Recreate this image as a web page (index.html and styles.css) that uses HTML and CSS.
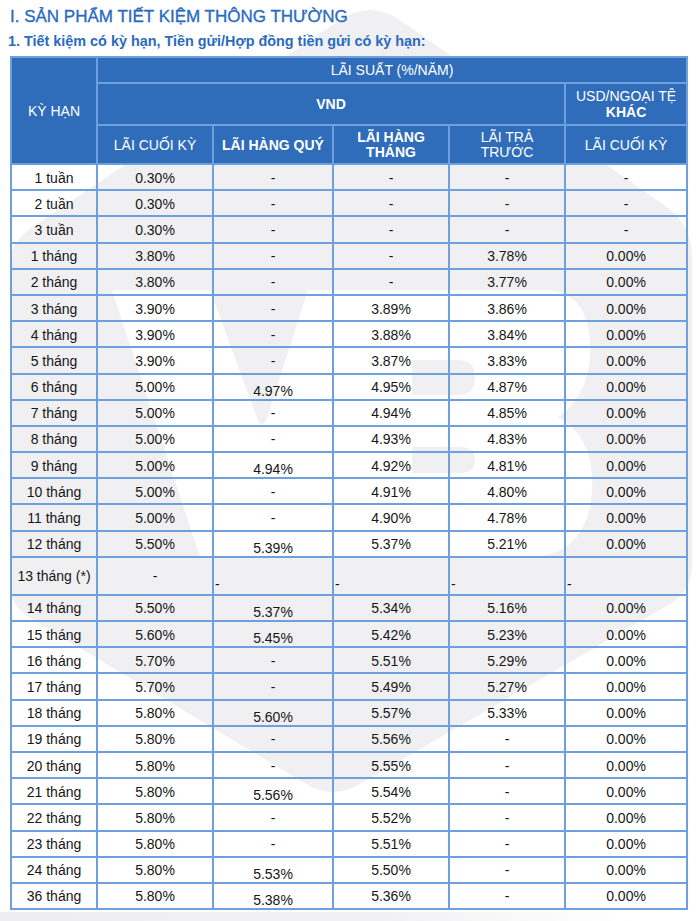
FILE: index.html
```html
<!DOCTYPE html>
<html lang="vi">
<head>
<meta charset="utf-8">
<title>Lãi suất tiết kiệm</title>
<link rel="stylesheet" href="styles.css">
</head>
<body>
<svg class="watermark" width="700" height="921" viewBox="0 0 700 921" aria-hidden="true">
  <defs>
    <linearGradient id="band" x1="0" y1="0" x2="1" y2="0">
      <stop offset="0" stop-color="#eeeef0"/>
      <stop offset="0.55" stop-color="#f1f1f3"/>
      <stop offset="0.9" stop-color="#ffffff"/>
    </linearGradient>
  </defs>
  <path class="wm-gray" d="M 40,222 L 340,20 Q 370,0 400,20 L 668,208 Q 692,226 692,256 L 692,566 Q 692,590 670,604 L 360,784 Q 333,800 306,784 L 30,618 Q 10,606 10,584 L 10,262 Q 10,240 40,222 Z"/>
  <path class="wm-white" d="M 112,290 L 545,290 C 580,290 592,320 590,355 C 589,385 575,405 558,417 C 582,430 594,455 592,490 C 590,530 570,557 530,557 L 200,557 Z"/>
  <path class="wm-gray" d="M 210,290 L 308,290 L 267,418 Q 262,430 257,418 Z"/>
  <path class="wm-gray" d="M 412,360 L 458,360 Q 475,360 475,377 Q 475,395 458,395 L 412,395 Z"/>
  <path class="wm-gray" d="M 412,447 L 460,447 Q 475,447 475,460 Q 475,473 460,473 L 412,473 Z"/>
  <rect x="0" y="912" width="700" height="9" fill="url(#band)"/>
</svg>

<main class="page">
  <h1 class="title">I. SẢN PHẨM TIẾT KIỆM THÔNG THƯỜNG</h1>
  <h2 class="subtitle">1. Tiết kiệm có kỳ hạn, Tiền gửi/Hợp đồng tiền gửi có kỳ hạn:</h2>

  <table class="rates">
    <colgroup>
      <col class="c1"><col class="c2"><col class="c3"><col class="c4"><col class="c5"><col class="c6">
    </colgroup>
    <thead>
      <tr class="h1">
        <th rowspan="3">KỲ HẠN</th>
        <th colspan="5">LÃI SUẤT (%/NĂM)</th>
      </tr>
      <tr class="h2">
        <th colspan="4" class="b">VND</th>
        <th>USD/NGOẠI TỆ<br><span class="b">KHÁC</span></th>
      </tr>
      <tr class="h3">
        <th>LÃI CUỐI KỲ</th>
        <th class="b">LÃI HÀNG QUÝ</th>
        <th class="b tight">LÃI HÀNG<br>THÁNG</th>
        <th class="tight">LÃI TRẢ<br>TRƯỚC</th>
        <th>LÃI CUỐI KỲ</th>
      </tr>
    </thead>
    <tbody>
      <tr><td>1 tuần</td><td>0.30%</td><td>-</td><td>-</td><td>-</td><td>-</td></tr>
      <tr><td>2 tuần</td><td>0.30%</td><td>-</td><td>-</td><td>-</td><td>-</td></tr>
      <tr><td>3 tuần</td><td>0.30%</td><td>-</td><td>-</td><td>-</td><td>-</td></tr>
      <tr><td>1 tháng</td><td>3.80%</td><td>-</td><td>-</td><td>3.78%</td><td>0.00%</td></tr>
      <tr><td>2 tháng</td><td>3.80%</td><td>-</td><td>-</td><td>3.77%</td><td>0.00%</td></tr>
      <tr><td>3 tháng</td><td>3.90%</td><td>-</td><td>3.89%</td><td>3.86%</td><td>0.00%</td></tr>
      <tr><td>4 tháng</td><td>3.90%</td><td>-</td><td>3.88%</td><td>3.84%</td><td>0.00%</td></tr>
      <tr><td>5 tháng</td><td>3.90%</td><td>-</td><td>3.87%</td><td>3.83%</td><td>0.00%</td></tr>
      <tr><td>6 tháng</td><td>5.00%</td><td class="low">4.97%</td><td>4.95%</td><td>4.87%</td><td>0.00%</td></tr>
      <tr><td>7 tháng</td><td>5.00%</td><td>-</td><td>4.94%</td><td>4.85%</td><td>0.00%</td></tr>
      <tr><td>8 tháng</td><td>5.00%</td><td>-</td><td>4.93%</td><td>4.83%</td><td>0.00%</td></tr>
      <tr><td>9 tháng</td><td>5.00%</td><td class="low">4.94%</td><td>4.92%</td><td>4.81%</td><td>0.00%</td></tr>
      <tr><td>10 tháng</td><td>5.00%</td><td>-</td><td>4.91%</td><td>4.80%</td><td>0.00%</td></tr>
      <tr><td>11 tháng</td><td>5.00%</td><td>-</td><td>4.90%</td><td>4.78%</td><td>0.00%</td></tr>
      <tr><td>12 tháng</td><td>5.50%</td><td class="low">5.39%</td><td>5.37%</td><td>5.21%</td><td>0.00%</td></tr>
      <tr class="tall"><td>13 tháng (*)</td><td>-</td><td class="corner">-</td><td class="corner">-</td><td class="corner">-</td><td class="corner">-</td></tr>
      <tr><td>14 tháng</td><td>5.50%</td><td class="low">5.37%</td><td>5.34%</td><td>5.16%</td><td>0.00%</td></tr>
      <tr><td>15 tháng</td><td>5.60%</td><td class="low">5.45%</td><td>5.42%</td><td>5.23%</td><td>0.00%</td></tr>
      <tr><td>16 tháng</td><td>5.70%</td><td>-</td><td>5.51%</td><td>5.29%</td><td>0.00%</td></tr>
      <tr><td>17 tháng</td><td>5.70%</td><td>-</td><td>5.49%</td><td>5.27%</td><td>0.00%</td></tr>
      <tr><td>18 tháng</td><td>5.80%</td><td class="low">5.60%</td><td>5.57%</td><td>5.33%</td><td>0.00%</td></tr>
      <tr><td>19 tháng</td><td>5.80%</td><td>-</td><td>5.56%</td><td>-</td><td>0.00%</td></tr>
      <tr><td>20 tháng</td><td>5.80%</td><td>-</td><td>5.55%</td><td>-</td><td>0.00%</td></tr>
      <tr><td>21 tháng</td><td>5.80%</td><td class="low">5.56%</td><td>5.54%</td><td>-</td><td>0.00%</td></tr>
      <tr><td>22 tháng</td><td>5.80%</td><td>-</td><td>5.52%</td><td>-</td><td>0.00%</td></tr>
      <tr><td>23 tháng</td><td>5.80%</td><td>-</td><td>5.51%</td><td>-</td><td>0.00%</td></tr>
      <tr><td>24 tháng</td><td>5.80%</td><td class="low">5.53%</td><td>5.50%</td><td>-</td><td>0.00%</td></tr>
      <tr><td>36 tháng</td><td>5.80%</td><td class="low">5.38%</td><td>5.36%</td><td>-</td><td>0.00%</td></tr>
    </tbody>
  </table>
</main>
</body>
</html>
```

FILE: styles.css
```css
html, body {
  margin: 0;
  padding: 0;
  background: #ffffff;
}

body {
  position: relative;
  width: 700px;
  height: 921px;
  overflow: hidden;
  font-family: "Liberation Sans", Arial, Helvetica, sans-serif;
  color: #161616;
}

.watermark {
  position: absolute;
  top: 0;
  left: 0;
  z-index: 0;
}

.wm-gray { fill: #f0f0f2; }
.wm-white { fill: #ffffff; }

.page {
  position: relative;
  z-index: 1;
  padding: 7px 0 0 10px;
}

.title {
  margin: 0;
  font-size: 17px;
  line-height: 20px;
  font-weight: normal;
  color: #2a6bbf;
  -webkit-text-stroke: 0.35px #2a6bbf;
}

.subtitle {
  margin: 5px 0 0 -2px;
  font-size: 14.4px;
  line-height: 18px;
  font-weight: bold;
  color: #2a6bbf;
}

.rates {
  margin-top: 6px;
  width: 676px;
  table-layout: fixed;
  border-collapse: collapse;
  font-size: 14px;
}

.c1 { width: 86px; }
.c2 { width: 116px; }
.c3 { width: 120px; }
.c4 { width: 116px; }
.c5 { width: 116px; }
.c6 { width: 122px; }

.rates th,
.rates td {
  border: 2px solid #6e9fdf;
  padding: 0;
  text-align: center;
  vertical-align: middle;
}

.rates th {
  background: #2f6cb9;
  color: #ffffff;
  font-weight: normal;
  line-height: 16px;
}

.rates th.b,
.rates .b {
  font-weight: bold;
}

.rates th.tight {
  line-height: 15px;
  padding-top: 1px;
}

.h1 { height: 26px; }
.h2 { height: 42px; }
.h3 { height: 39px; }

.rates tbody tr { height: 26.2px; }
.rates tbody tr.tall { height: 38px; }

.rates td {
  line-height: 16px;
  padding-top: 1px;
}

.rates td.low {
  padding-top: 8px;
  padding-bottom: 0;
}

.rates td.corner {
  text-align: left;
  vertical-align: bottom;
  padding: 0 0 2px 1px;
}
```
